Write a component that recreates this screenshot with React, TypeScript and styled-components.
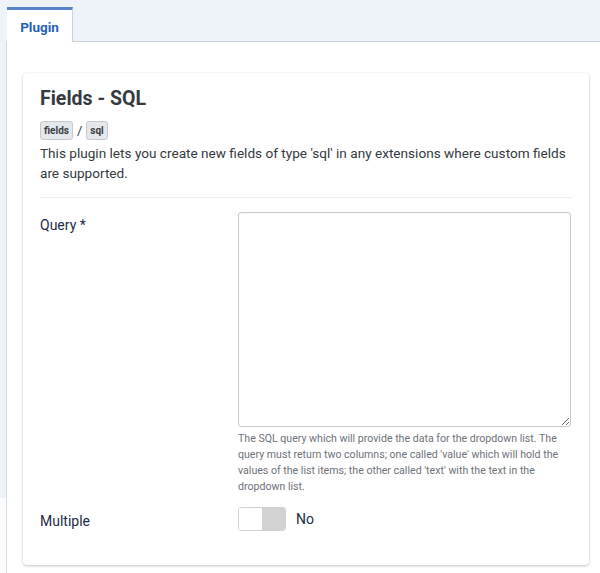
import styled, { createGlobalStyle } from 'styled-components';

const GlobalStyle = createGlobalStyle`
  html, body {
    margin: 0;
    padding: 0;
    background: #fff;
  }
  body {
    font-family: Roboto, "Liberation Sans", Arial, sans-serif;
    -webkit-font-smoothing: antialiased;
  }
`;

const App = () => {
  return (
    <>
      <GlobalStyle />
      <Page>
        <TabBar>
          <Tab>Plugin</Tab>
        </TabBar>
        <TabPanel>
          <Card>
            <Title>Fields - SQL</Title>
            <Crumbs>
              <Badge>fields</Badge>
              <Slash>/</Slash>
              <Badge>sql</Badge>
            </Crumbs>
            <Description>
              This plugin lets you create new fields of type 'sql' in any extensions where custom fields
              are supported.
            </Description>
            <Divider />
            <FieldRow>
              <Label>Query *</Label>
              <Control>
                <TextArea />
                <Help>
                  The SQL query which will provide the data for the dropdown list. The query must return two
                  columns; one called 'value' which will hold the values of the list items; the other called
                  'text' with the text in the dropdown list.
                </Help>
              </Control>
            </FieldRow>
            <FieldRow $center>
              <Label>Multiple</Label>
              <Control>
                <SwitchWrap>
                  <Switch>
                    <SwitchHalf />
                    <SwitchHalf $off />
                  </Switch>
                  <SwitchText>No</SwitchText>
                </SwitchWrap>
              </Control>
            </FieldRow>
          </Card>
        </TabPanel>
      </Page>
    </>
  );
};

export default App;

const Page = styled.div`
  min-height: 573px;
  padding-left: 6px;
  background: linear-gradient(to bottom, #eef2f9 498px, #fbfcfe 498px);
`;

const TabBar = styled.div`
  display: flex;
  height: 41px;
  align-items: flex-end;
  padding-left: 1px;
`;

const Tab = styled.div`
  box-sizing: border-box;
  width: 66px;
  height: 35px;
  margin-bottom: -1px;
  position: relative;
  z-index: 1;
  display: flex;
  align-items: center;
  justify-content: center;
  background: #fff;
  border-top: 3px solid #5682c9;
  border-right: 1px solid #c9d2de;
  color: #1f62b9;
  font-size: 13.5px;
  font-weight: 700;
  padding-top: 1px;
`;

const TabPanel = styled.div`
  background: #fff;
  border-top: 1px solid #c9d2de;
  border-left: 1px solid #d3dae4;
  padding: 31px 11px 8px 16px;
  min-height: 532px;
  box-sizing: border-box;
`;

const Card = styled.div`
  width: 566px;
  box-sizing: border-box;
  background: #fff;
  border-radius: 4px;
  box-shadow: 0 1px 3px rgba(0, 0, 0, 0.22), 0 0 1px rgba(0, 0, 0, 0.12);
  padding: 14px 17px 34px 17px;
`;

const Title = styled.h2`
  margin: 0;
  font-size: 19.5px;
  line-height: 24px;
  font-weight: 700;
  color: #343a40;
`;

const Crumbs = styled.div`
  display: flex;
  align-items: center;
  gap: 4px;
  margin-top: 10px;
`;

const Badge = styled.span`
  display: inline-block;
  height: 19px;
  box-sizing: border-box;
  padding: 0 3px;
  border: 1px solid #c5c9cf;
  border-radius: 3px;
  background: #e4e7eb;
  color: #3a3f45;
  font-size: 10px;
  font-weight: 700;
  line-height: 17px;
`;

const Slash = styled.span`
  font-size: 13px;
  color: #343a40;
`;

const Description = styled.p`
  margin: 4px 0 0;
  font-size: 13.6px;
  line-height: 19.5px;
  color: #343a40;
`;

const Divider = styled.hr`
  margin: 14px 0 14px;
  border: 0;
  border-top: 1px solid #ebedf0;
`;

const FieldRow = styled.div<{ $center?: boolean }>`
  display: grid;
  grid-template-columns: 198px 333px;
  align-items: ${({ $center }) => ($center ? 'center' : 'start')};
  margin-bottom: 12px;

  &:last-child {
    margin-bottom: 0;
  }
`;

const Label = styled.label`
  font-size: 14px;
  line-height: 20px;
  color: #1c2b47;
  padding-top: 3px;
`;

const Control = styled.div`
  display: flex;
  flex-direction: column;
`;

const TextArea = styled.textarea`
  box-sizing: border-box;
  width: 333px;
  height: 215px;
  margin: 0;
  border: 1px solid #c8ccd2;
  border-radius: 3px;
  background: #fff;
  box-shadow: inset 0 1px 1px rgba(0, 0, 0, 0.04);
  font-family: inherit;
  font-size: 14px;
  resize: vertical;
  display: block;
`;

const Help = styled.div`
  margin-top: 4px;
  font-size: 10.6px;
  line-height: 16px;
  color: #6d7279;
`;

const SwitchWrap = styled.div`
  display: flex;
  align-items: center;
  gap: 10px;
`;

const Switch = styled.div`
  display: flex;
  width: 48px;
  height: 24px;
  box-sizing: border-box;
  border: 1px solid #cfd2d6;
  border-radius: 3px;
  overflow: hidden;
`;

const SwitchHalf = styled.span<{ $off?: boolean }>`
  flex: 1;
  background: ${({ $off }) => ($off ? '#d2d2d2' : '#fff')};
`;

const SwitchText = styled.span`
  font-size: 14px;
  color: #1c2b47;
`;
